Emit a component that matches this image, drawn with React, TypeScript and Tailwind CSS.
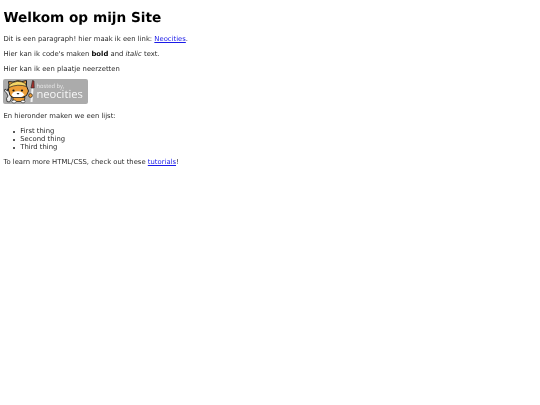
function Badge() {
  return (
    <div className="relative w-[85px] h-[25.6px] bg-[#ababab] rounded-[2px] overflow-hidden" style={{ fontFamily: '"Open Sans", sans-serif' }}>
      <svg className="absolute left-0 top-0" width="33" height="26" viewBox="0 0 33 26">
        <path d="M2 10 L1.5 12 L3.5 14 L5 17 L3.5 19.5 L4 22.5 L6.5 23 L8 20.5 L8.5 17 L6.5 13.5 L6.5 11 L4.5 10 L4.5 12 Z" fill="#eeeeee" stroke="#222" strokeWidth="0.8" />
        <path d="M6 6 L5.5 2.5 L10 3 Q15 0.5 19 2.5 L23.5 1.5 L23.5 7 L25.5 12 L23.5 16.5 L18.5 19 L10.5 19 L7 16.5 L5.5 11 Z" fill="#ee9f38" stroke="#222" strokeWidth="1" />
        <path d="M6 6 Q14 -0.5 22.5 4.5 L23.5 7.5 Q15 4.5 6 8.5 Z" fill="#f5d565" stroke="#222" strokeWidth="0.7" />
        <path d="M10 13.5 Q15 11 19.5 13.5 L21.5 16 L17.5 18.5 L11 18.5 L8.5 16 Z" fill="#ffffff" />
        <circle cx="10.5" cy="11.5" r="1.1" fill="#111" />
        <circle cx="19" cy="11.5" r="1.1" fill="#111" />
        <path d="M13.5 14 L16.5 14 L15 15.8 Z" fill="#222" />
        <path d="M10 18.5 L10 22.5 L21 22.5 L22 18.5 Z" fill="#ee9f38" stroke="#222" strokeWidth="0.8" />
        <ellipse cx="11" cy="22.5" rx="2.2" ry="1.5" fill="#fff" stroke="#222" strokeWidth="0.6" />
        <ellipse cx="20" cy="22.5" rx="2" ry="1.3" fill="#fff" stroke="#222" strokeWidth="0.6" />
        <path d="M29.5 9 L28.5 23" stroke="#f2f2f2" strokeWidth="2" />
        <path d="M28 9 L29.5 1.5 L31 2 L31.2 9 Z" fill="#a8322d" stroke="#222" strokeWidth="0.6" />
        <circle cx="27.5" cy="16.5" r="1.9" fill="#ee9f38" stroke="#222" strokeWidth="0.7" />
      </svg>
      <div className="absolute left-[33px] top-[4.5px] flex flex-col whitespace-nowrap">
        <span className="text-[5.8px] leading-[6px] text-[#e8e8e8]">hosted by,</span>
        <span className="text-[11.2px] leading-[12.5px] text-[#f6f6f6]">neocities</span>
      </div>
    </div>
  );
}

function Item({ children }: { children: string }) {
  return (
    <li className="flex items-center">
      <span className="w-[2.2px] h-[2.2px] rounded-full bg-[#222] mr-[5.1px]" />
      {children}
    </li>
  );
}

export default function App() {
  const f = { fontFamily: '"DejaVu Sans", sans-serif' };
  return (
    <div className="bg-white min-h-[405px]">
      <div style={f} className="text-[#2a2a2a] text-[6.83px] leading-[7.95px] px-[3.4px] pt-[11px] [text-rendering:geometricPrecision] [will-change:transform]">
        <h1 className="text-[13.66px] leading-[15.9px] font-bold text-black mb-[9.15px]">Welkom op mijn Site</h1>
        <p className="mb-[6.83px]">Dit is een paragraph! hier maak ik een link: <a className="text-[#1a1ae8] underline">Neocities</a>.</p>
        <p className="mb-[6.83px]">Hier kan ik code's maken <b className="text-black">bold</b> and <i>italic</i> text.</p>
        <p className="mb-[5px]">Hier kan ik een plaatje neerzetten</p>
        <div className="mb-[9px]"><Badge /></div>
        <p className="mb-[6.83px]">En hieronder maken we een lijst:</p>
        <ul className="pl-[9.6px] mb-[6.83px]">
          <Item>First thing</Item>
          <Item>Second thing</Item>
          <Item>Third thing</Item>
        </ul>
        <p>To learn more HTML/CSS, check out these <a className="text-[#1a1ae8] underline">tutorials</a>!</p>
      </div>
    </div>
  );
}
